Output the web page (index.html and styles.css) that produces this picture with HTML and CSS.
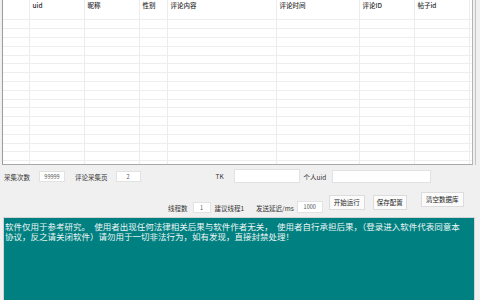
FILE: index.html
```html
<!DOCTYPE html>
<html lang="zh-CN">
<head>
<meta charset="utf-8">
<title>评论采集</title>
<link rel="stylesheet" href="styles.css">
</head>
<body>
<div class="grid-wrap">
  <table class="grid">
    <colgroup>
      <col class="c0"><col class="c1"><col class="c2"><col class="c3"><col class="c4"><col class="c5"><col class="c6"><col class="c7"><col class="c8">
    </colgroup>
    <thead>
      <tr><th></th><th>uid</th><th>昵称</th><th>性别</th><th>评论内容</th><th>评论时间</th><th>评论ID</th><th>帖子id</th><th></th></tr>
    </thead>
    <tbody>
      <tr><td></td><td></td><td></td><td></td><td></td><td></td><td></td><td></td><td></td></tr>
      <tr><td></td><td></td><td></td><td></td><td></td><td></td><td></td><td></td><td></td></tr>
      <tr><td></td><td></td><td></td><td></td><td></td><td></td><td></td><td></td><td></td></tr>
      <tr><td></td><td></td><td></td><td></td><td></td><td></td><td></td><td></td><td></td></tr>
      <tr><td></td><td></td><td></td><td></td><td></td><td></td><td></td><td></td><td></td></tr>
      <tr><td></td><td></td><td></td><td></td><td></td><td></td><td></td><td></td><td></td></tr>
      <tr><td></td><td></td><td></td><td></td><td></td><td></td><td></td><td></td><td></td></tr>
      <tr><td></td><td></td><td></td><td></td><td></td><td></td><td></td><td></td><td></td></tr>
      <tr><td></td><td></td><td></td><td></td><td></td><td></td><td></td><td></td><td></td></tr>
      <tr><td></td><td></td><td></td><td></td><td></td><td></td><td></td><td></td><td></td></tr>
      <tr><td></td><td></td><td></td><td></td><td></td><td></td><td></td><td></td><td></td></tr>
      <tr><td></td><td></td><td></td><td></td><td></td><td></td><td></td><td></td><td></td></tr>
      <tr><td></td><td></td><td></td><td></td><td></td><td></td><td></td><td></td><td></td></tr>
      <tr><td></td><td></td><td></td><td></td><td></td><td></td><td></td><td></td><td></td></tr>
      <tr><td></td><td></td><td></td><td></td><td></td><td></td><td></td><td></td><td></td></tr>
      <tr><td></td><td></td><td></td><td></td><td></td><td></td><td></td><td></td><td></td></tr>
      <tr><td></td><td></td><td></td><td></td><td></td><td></td><td></td><td></td><td></td></tr>
      <tr><td></td><td></td><td></td><td></td><td></td><td></td><td></td><td></td><td></td></tr>
    </tbody>
  </table>
</div>

<div class="row row1">
  <span class="lbl l-count">采集次数</span>
  <span class="inp i-count">99999</span>
  <span class="lbl l-page">评论采集页</span>
  <span class="inp i-page">2</span>
  <span class="lbl l-tk">TK</span>
  <span class="inp i-tk"></span>
  <span class="lbl l-uid">个人uid</span>
  <span class="inp i-uid"></span>
</div>

<div class="row row2">
  <span class="lbl l-thread">线程数</span>
  <span class="inp i-thread">1</span>
  <span class="lbl l-hint">建议线程1</span>
  <span class="lbl l-delay">发送延迟/ms</span>
  <span class="inp i-delay">1000</span>
  <button class="btn b-start">开始运行</button>
  <button class="btn b-save">保存配置</button>
  <button class="btn b-clear">清空数据库</button>
</div>

<div class="notice">
  <p>软件仅用于参考研究。　使用者出现任何法律相关后果与软件作者无关，　使用者自行承担后果，（登录进入软件代表同意本<br>协议，反之请关闭软件）请勿用于一切非法行为，如有发现，直接封禁处理！</p>
</div>
</body>
</html>
```

FILE: styles.css
```css
* { box-sizing: border-box; }

html, body {
  margin: 0;
  padding: 0;
  width: 480px;
  height: 300px;
  overflow: hidden;
  background: #f0f0f0;
  font-family: "Noto Sans CJK SC", sans-serif;
  color: #333;
}

.grid-wrap {
  margin-left: 2px;
  width: 471px;
  height: 165px;
  background: #fff;
  border-left: 1px solid #9c9c9c;
  border-right: 1px solid #b4b4b4;
  border-bottom: 1px solid #a8a8a8;
  overflow: hidden;
  box-shadow: 2px 0 0 #f0f0f0, 3px 0 0 #c4c4c4;
}

.grid {
  border-collapse: collapse;
  table-layout: fixed;
  width: 469px;
}

.c0 { width: 26px; }
.c1 { width: 55px; }
.c2 { width: 55px; }
.c3 { width: 28px; }
.c4 { width: 109px; }
.c5 { width: 83px; }
.c6 { width: 55px; }
.c7 { width: 55px; }
.c8 { width: 3px; }

.grid th,
.grid td {
  padding: 0;
  border-right: 1px solid #ececec;
}

.grid th {
  height: 11.2px;
  padding-left: 3px;
  text-align: left;
  font-weight: 500;
  font-size: 6.5px;
  line-height: 11px;
  color: #2e2e2e;
  white-space: nowrap;
  overflow: hidden;
}

.grid td {
  height: 8.8px;
  border-bottom: 1px solid #eeeeee;
}

.row {
  display: flex;
  font-size: 6.5px;
}

.lbl {
  white-space: nowrap;
  color: #333;
  line-height: 10px;
}

.inp {
  display: flex;
  align-items: center;
  justify-content: center;
  background: #fff;
  border: 1px solid #e2e2e2;
  font-size: 5.5px;
  color: #555;
}

/* row 1 */
.row1 {
  height: 23px;
  align-items: flex-start;
}
.l-count { margin: 7px 0 0 4px; }
.i-count { margin: 6px 0 0 9px; width: 26px; height: 11px; }
.l-page  { margin: 7px 0 0 10px; }
.i-page  { margin: 6px 0 0 8px; width: 25px; height: 11px; }
.l-tk    { margin: 6px 0 0 75px; }
.i-tk    { margin: 4px 0 0 10px; width: 66px; height: 14px; }
.l-uid   { margin: 7px 0 0 4px; }
.i-uid   { margin: 5px 0 0 6px; width: 99px; height: 13px; }

/* row 2 */
.row2 {
  height: 29px;
  align-items: flex-start;
}
.l-thread { margin: 15px 0 0 168px; }
.i-thread { margin: 14px 0 0 5px; width: 18px; height: 11px; }
.l-hint   { margin: 15px 0 0 4px; }
.l-delay  { margin: 15px 0 0 12px; }
.i-delay  { margin: 13px 0 0 3px; width: 26px; height: 12px; }

.btn {
  font-family: inherit;
  font-size: 6.5px;
  color: #222;
  background: #fbfbfb;
  border: 1px solid #dcdcdc;
  padding: 0;
  height: 15px;
  line-height: 13px;
  white-space: nowrap;
}
.b-start { margin: 7px 0 0 6px; width: 36px; }
.b-save  { margin: 7px 0 0 8px; width: 34px; }
.b-clear { margin: 4px 0 0 14px; width: 43px; }

/* notice */
.notice {
  margin: 0 5px 0 3px;
  height: 88px;
  background: #008080;
  border: 1px solid #d4d4d4;
  border-bottom: none;
  overflow: hidden;
}

.notice p {
  margin: 0;
  padding: 3px 0 0 1px;
  font-size: 8.5px;
  line-height: 10px;
  color: #eef7f7;
  white-space: nowrap;
}
```
